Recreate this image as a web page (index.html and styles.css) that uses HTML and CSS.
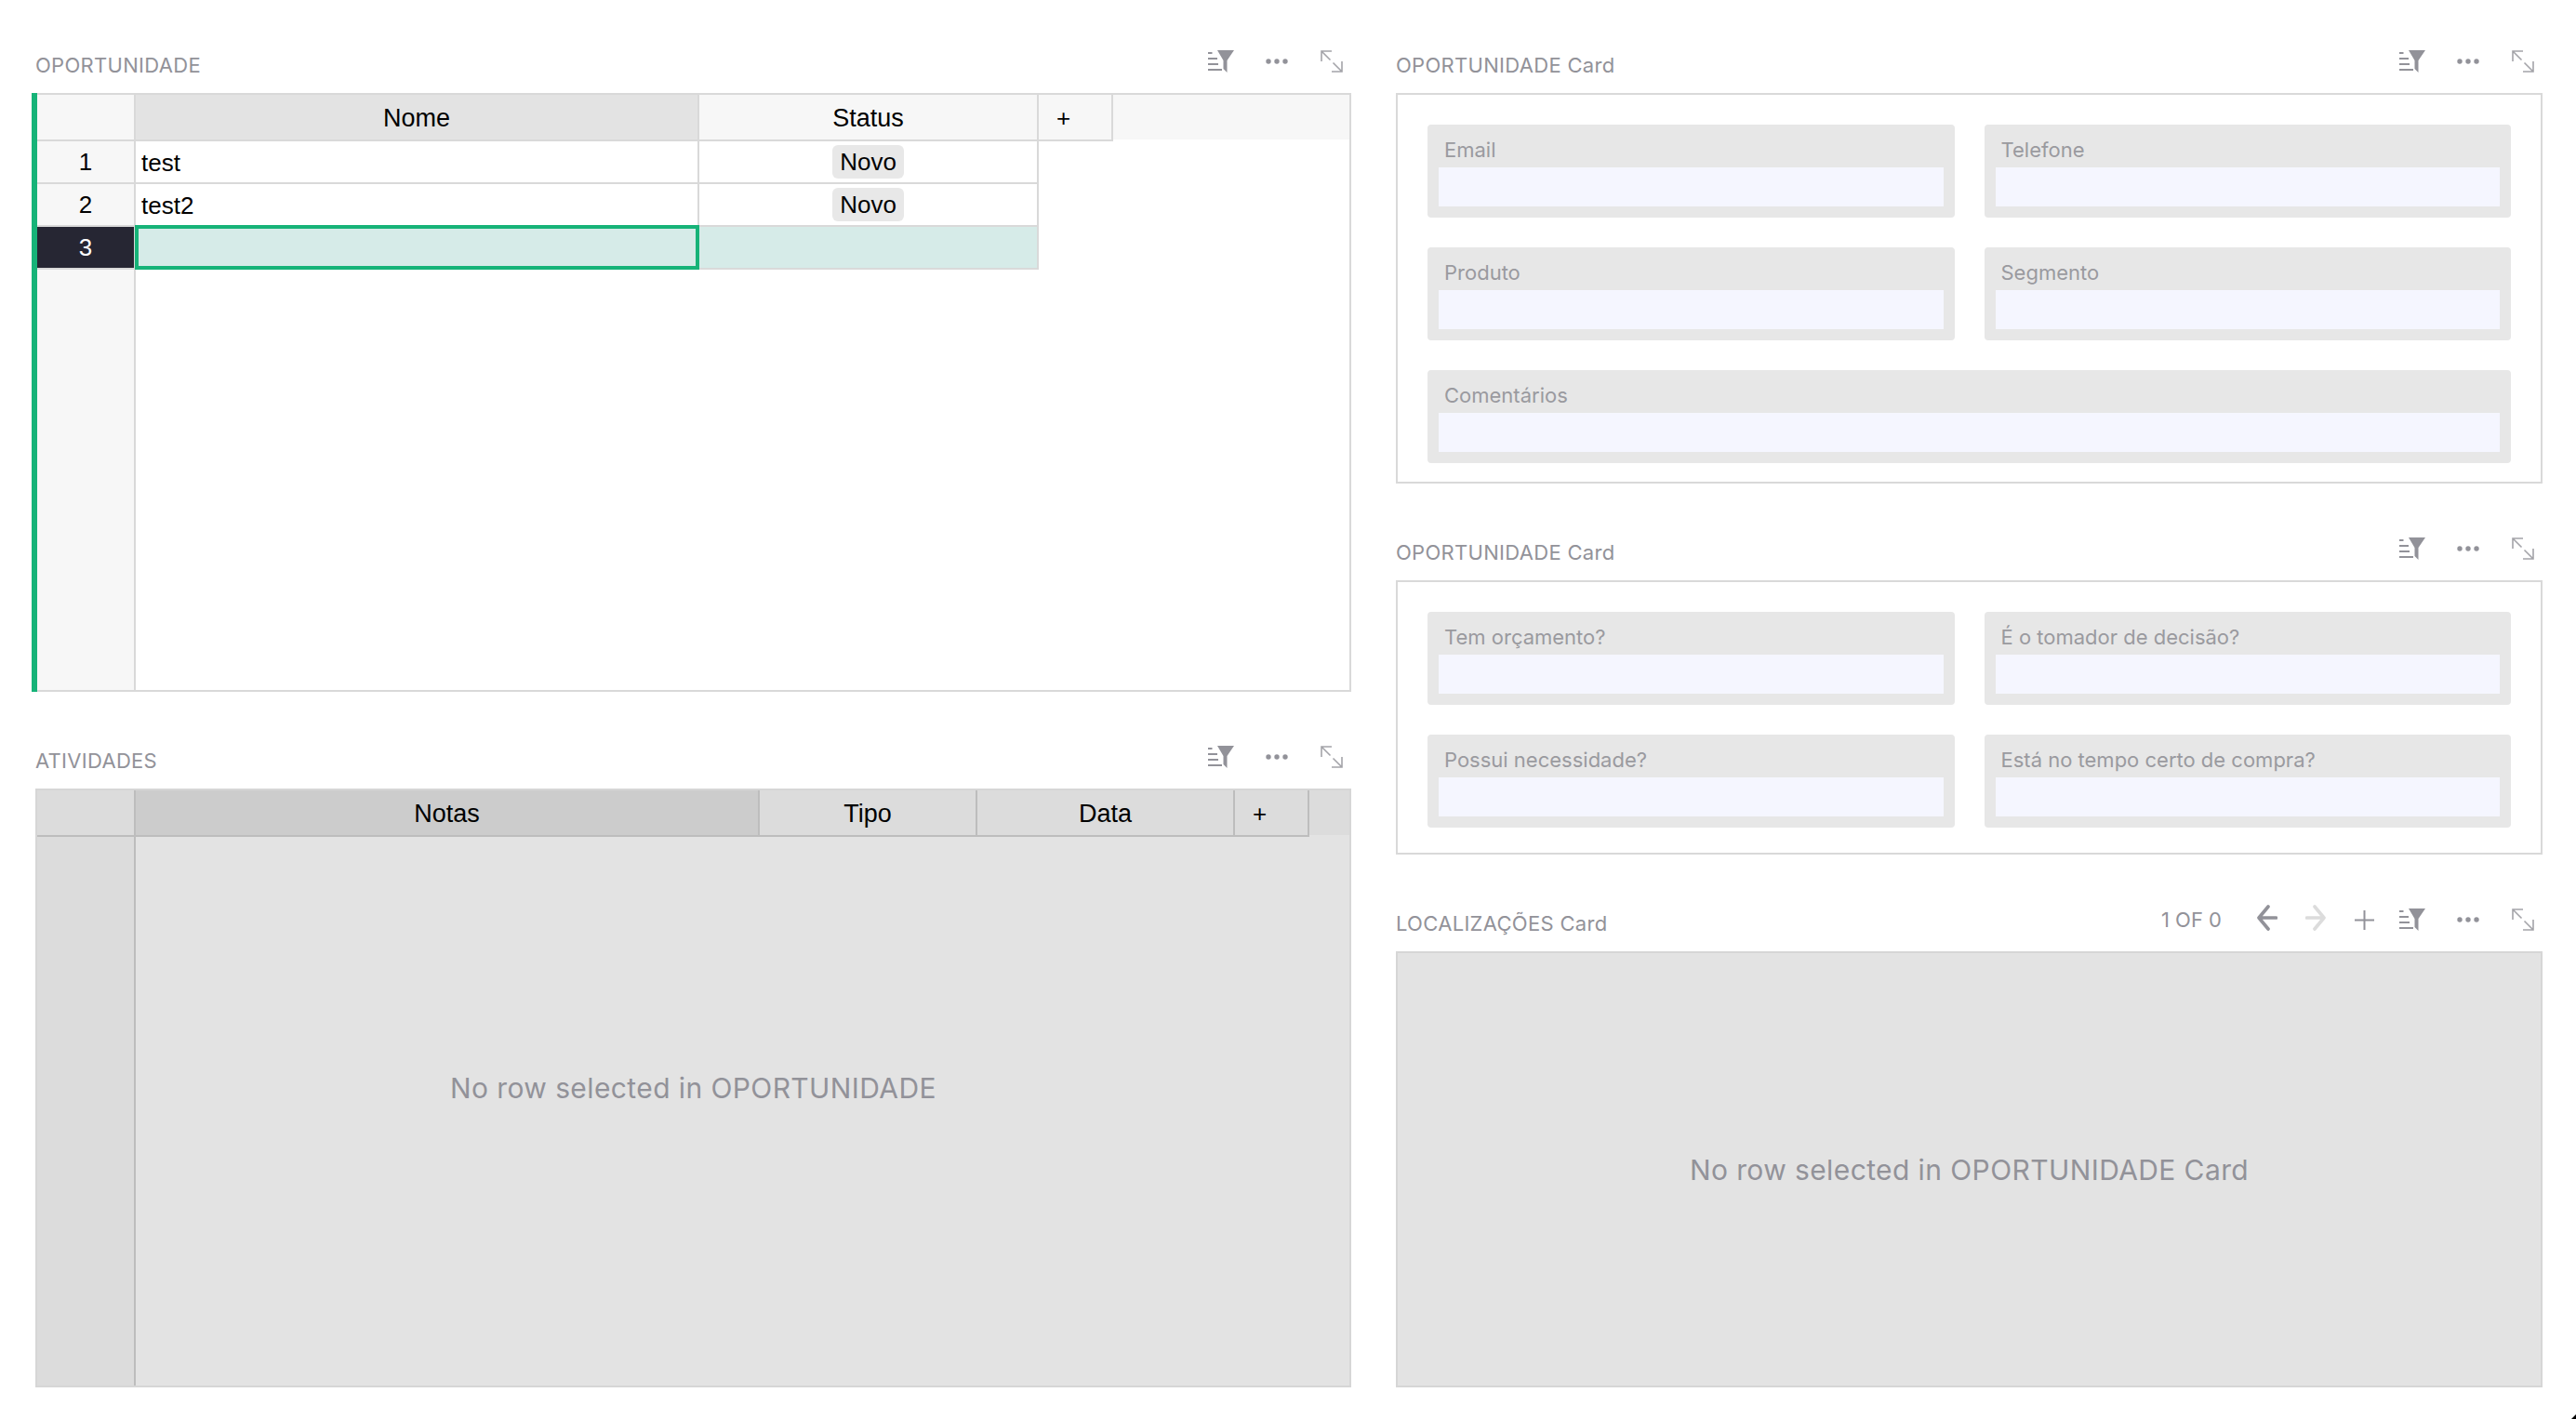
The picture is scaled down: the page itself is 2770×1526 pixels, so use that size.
FILE: index.html
```html
<!DOCTYPE html>
<html lang="en">

<head>
    <title>OPORTUNIDADE</title>
    <link rel="stylesheet" href="styles.css">
</head>

<body>
    <svg width="0" height="0" class="icon-defs">
        <symbol id="icon-filter" viewBox="0 0 28 24">
            <path d="M10 0H28L20.5 11V24L16.5 20V11Z" fill="#929299"/>
            <path d="M0 3H4.5M0 9H10M0 15H11M0 21H15" stroke="#929299" stroke-width="2" fill="none"/>
        </symbol>
        <symbol id="icon-dots" viewBox="0 0 24 24">
            <circle cx="3" cy="12" r="2.7" fill="#929299"/>
            <circle cx="12" cy="12" r="2.7" fill="#929299"/>
            <circle cx="21" cy="12" r="2.7" fill="#929299"/>
        </symbol>
        <symbol id="icon-expand" viewBox="0 0 24 24">
            <path d="M1 12V1H12M1 1L10.500 10.500M23 12V23H12M23 23L13.500 13.500" stroke="#a4a4a9" stroke-width="1.600" fill="none"/>
        </symbol>
    </svg>

    <div class="layout">
        <div class="column">
            <section class="panel">
                <div class="panel-header">
                    <span class="panel-title">OPORTUNIDADE</span>
                    <div class="toolbar">
                        <svg class="icon-filter"><use href="#icon-filter"/></svg>
                        <svg class="icon-square"><use href="#icon-dots"/></svg>
                        <svg class="icon-square"><use href="#icon-expand"/></svg>
                    </div>
                </div>
                <div class="grid-box active-grid grid-main">
                    <div class="active-bar"></div>
                    <div class="row header-row">
                        <div class="cell gutter"></div>
                        <div class="cell head col-nome selected-head">Nome</div>
                        <div class="cell head col-status">Status</div>
                        <div class="cell head col-add">+</div>
                        <div class="head-rest"></div>
                    </div>
                    <div class="row">
                        <div class="cell gutter">1</div>
                        <div class="cell text col-nome">test</div>
                        <div class="cell pill-cell col-status"><span class="pill">Novo</span></div>
                    </div>
                    <div class="row">
                        <div class="cell gutter">2</div>
                        <div class="cell text col-nome">test2</div>
                        <div class="cell pill-cell col-status"><span class="pill">Novo</span></div>
                    </div>
                    <div class="row">
                        <div class="cell gutter gutter-current">3</div>
                        <div class="cell col-nome row-current cursor-cell"></div>
                        <div class="cell col-status row-current"></div>
                    </div>
                    <div class="row filler">
                        <div class="gutter-fill"></div>
                    </div>
                </div>
            </section>

            <section class="panel">
                <div class="panel-header">
                    <span class="panel-title">ATIVIDADES</span>
                    <div class="toolbar">
                        <svg class="icon-filter"><use href="#icon-filter"/></svg>
                        <svg class="icon-square"><use href="#icon-dots"/></svg>
                        <svg class="icon-square"><use href="#icon-expand"/></svg>
                    </div>
                </div>
                <div class="grid-box disabled-grid grid-main">
                    <div class="row header-row">
                        <div class="cell gutter"></div>
                        <div class="cell head col-notas selected-head">Notas</div>
                        <div class="cell head col-tipo">Tipo</div>
                        <div class="cell head col-data">Data</div>
                        <div class="cell head col-add">+</div>
                        <div class="head-rest"></div>
                    </div>
                    <div class="row filler">
                        <div class="gutter-fill"></div>
                    </div>
                    <div class="no-row">No row selected in OPORTUNIDADE</div>
                </div>
            </section>
        </div>

        <div class="column">
            <section class="panel">
                <div class="panel-header">
                    <span class="panel-title">OPORTUNIDADE Card</span>
                    <div class="toolbar">
                        <svg class="icon-filter"><use href="#icon-filter"/></svg>
                        <svg class="icon-square"><use href="#icon-dots"/></svg>
                        <svg class="icon-square"><use href="#icon-expand"/></svg>
                    </div>
                </div>
                <div class="card-box card-contact">
                    <div class="field"><div class="field-label">Email</div><div class="field-input"></div></div>
                    <div class="field"><div class="field-label">Telefone</div><div class="field-input"></div></div>
                    <div class="field"><div class="field-label">Produto</div><div class="field-input"></div></div>
                    <div class="field"><div class="field-label">Segmento</div><div class="field-input"></div></div>
                    <div class="field field-wide"><div class="field-label">Comentários</div><div class="field-input"></div></div>
                </div>
            </section>

            <section class="panel">
                <div class="panel-header">
                    <span class="panel-title">OPORTUNIDADE Card</span>
                    <div class="toolbar">
                        <svg class="icon-filter"><use href="#icon-filter"/></svg>
                        <svg class="icon-square"><use href="#icon-dots"/></svg>
                        <svg class="icon-square"><use href="#icon-expand"/></svg>
                    </div>
                </div>
                <div class="card-box card-qualify">
                    <div class="field"><div class="field-label">Tem orçamento?</div><div class="field-input"></div></div>
                    <div class="field"><div class="field-label">É o tomador de decisão?</div><div class="field-input"></div></div>
                    <div class="field"><div class="field-label">Possui necessidade?</div><div class="field-input"></div></div>
                    <div class="field"><div class="field-label">Está no tempo certo de compra?</div><div class="field-input"></div></div>
                </div>
            </section>

            <section class="panel">
                <div class="panel-header">
                    <span class="panel-title">LOCALIZAÇÕES Card</span>
                    <div class="toolbar">
                        <span class="pager">1 OF 0</span>
                        <svg class="icon-arrow arrow-back" viewBox="0 0 22 28"><path d="M20.500 14H3M12 2L2 14L12 26" stroke="#929299" stroke-width="3.600" stroke-linecap="round" stroke-linejoin="round" fill="none"/></svg>
                        <svg class="icon-arrow arrow-next" viewBox="0 0 22 28"><path d="M1.500 14H19M10 2L20 14L10 26" stroke="#dcdcdc" stroke-width="3.600" stroke-linecap="round" stroke-linejoin="round" fill="none"/></svg>
                        <svg class="icon-plus" viewBox="0 0 21 21"><path d="M10.500 0V21M0 10.500H21" stroke="#929299" stroke-width="2" fill="none"/></svg>
                        <svg class="icon-filter"><use href="#icon-filter"/></svg>
                        <svg class="icon-square"><use href="#icon-dots"/></svg>
                        <svg class="icon-square"><use href="#icon-expand"/></svg>
                    </div>
                </div>
                <div class="card-box card-empty">
                    <div class="no-row">No row selected in OPORTUNIDADE Card</div>
                </div>
            </section>
        </div>
    </div>

    <svg class="corner-mark" viewBox="0 0 5 5"><path d="M5 0V5H0Z" fill="#000"/></svg>
</body>

</html>
```

FILE: styles.css
```css
* {
    box-sizing: border-box;
}

html,
body {
    margin: 0;
    height: 1526px;
    overflow: hidden;
    background-color: #fff;
}

body {
    padding: 40px 36px 0 38px;
    position: relative;
    font-family: "Inter", "Noto Sans", sans-serif;
    color: #929299;
}

.icon-defs {
    display: none;
}

.layout {
    display: grid;
    grid-template-columns: 1415px 1233px;
    column-gap: 48px;
}

.column {
    display: flex;
    flex-direction: column;
    gap: 44px;
}

/* section header */
.panel-header {
    height: 60px;
    display: flex;
    justify-content: space-between;
    align-items: flex-start;
}

.panel-title {
    margin-top: 19px;
    font-size: 22px;
    line-height: 22px;
    letter-spacing: 0.3px;
    white-space: nowrap;
}

.toolbar {
    margin-top: 14px;
    margin-right: 9px;
    height: 24px;
    display: flex;
    align-items: center;
}

.toolbar svg {
    flex: none;
    display: block;
}

.icon-filter {
    width: 28px;
    height: 24px;
}

.icon-square {
    width: 24px;
    height: 24px;
    margin-left: 35px;
}

.icon-filter + .icon-square {
    margin-left: 34px;
}

.pager {
    font-size: 22px;
    line-height: 24px;
    margin-right: 38px;
}

.icon-arrow {
    width: 22px;
    height: 28px;
    margin-top: -4px;
}

.arrow-next {
    margin-left: 30px;
}

.icon-plus {
    width: 21px;
    height: 21px;
    margin: 0 27px 0 31px;
}

/* grids */
.grid-box {
    position: relative;
    display: flex;
    flex-direction: column;
    border: 2px solid #d9d9d9;
    font-family: "Liberation Sans", Arial, sans-serif;
    font-size: 26px;
    color: #000;
}

.grid-main {
    height: 644px;
}

.active-bar {
    position: absolute;
    left: -6px;
    top: -2px;
    bottom: -2px;
    width: 6px;
    background-color: #16b378;
}

.row {
    height: 46px;
    display: flex;
    flex: none;
}

.header-row {
    height: 50px;
}

.filler {
    flex: 1;
}

.cell {
    flex: none;
    height: 100%;
    display: flex;
    align-items: center;
    justify-content: center;
    border-right: 2px solid #d9d9d9;
    border-bottom: 2px solid #d9d9d9;
}

.gutter {
    width: 106px;
    background-color: #f7f7f7;
}

.gutter-fill {
    width: 106px;
    background-color: #f7f7f7;
    border-right: 2px solid #d9d9d9;
}

.gutter-current {
    background-color: #262633;
    color: #fff;
}

.head {
    padding-top: 2px;
    font-size: 27px;
    background-color: #f7f7f7;
}

.selected-head {
    background-color: #e3e3e3;
}

.head-rest {
    flex: 1;
    height: 48px;
    background-color: #f7f7f7;
}

.col-nome {
    width: 606px;
}

.col-status {
    width: 365px;
}

.col-add {
    width: 80px;
    justify-content: flex-start;
    padding-left: 19px;
    font-size: 26px;
}

.col-notas {
    width: 671px;
}

.col-tipo {
    width: 234px;
}

.col-data {
    width: 277px;
}

.text {
    justify-content: flex-start;
    padding: 3px 0 0 6px;
}

.pill {
    height: 36px;
    padding: 0 8px;
    display: flex;
    align-items: center;
    border-radius: 6px;
    background-color: #e8e8e8;
}

.row-current {
    background-color: #d6ebe8;
}

.cursor-cell {
    position: relative;
}

.cursor-cell::after {
    content: "";
    position: absolute;
    left: -1px;
    right: -2px;
    top: -2px;
    bottom: -2px;
    border: 4px solid #16b378;
}

/* disabled grid, no row picked in the linked section */
.disabled-grid {
    background-color: #e3e3e3;
    border-color: #d6d6d6;
}

.disabled-grid .cell {
    border-color: #bdbdbd;
}

.disabled-grid .gutter,
.disabled-grid .head,
.disabled-grid .head-rest,
.disabled-grid .gutter-fill {
    background-color: #dcdcdc;
}

.disabled-grid .gutter-fill {
    border-color: #bdbdbd;
}

.disabled-grid .selected-head {
    background-color: #ccc;
}

.no-row {
    position: absolute;
    top: 0;
    left: 0;
    right: 0;
    bottom: 0;
    display: flex;
    align-items: center;
    justify-content: center;
    font-family: "Inter", "Noto Sans", sans-serif;
    font-size: 30px;
    letter-spacing: 0.4px;
    color: #929299;
}

/* cards */
.card-box {
    position: relative;
    border: 2px solid #d9d9d9;
}

.card-contact,
.card-qualify {
    display: grid;
    grid-template-columns: 1fr 1fr;
    grid-auto-rows: 100px;
    gap: 32px;
    padding: 32px 32px 0;
}

.card-contact {
    height: 420px;
}

.card-qualify {
    height: 295px;
}

.card-empty {
    height: 469px;
    background-color: #e3e3e3;
    border-color: #d6d6d6;
}

.field {
    padding: 0 12px 12px;
    background-color: #e7e7e7;
    border-radius: 4px;
}

.field-wide {
    grid-column: span 2;
}

.field-label {
    height: 46px;
    padding: 15px 0 0 6px;
    font-size: 22px;
    line-height: 24px;
    color: #9a9a9f;
    white-space: nowrap;
}

.field-input {
    height: 42px;
    background-color: #f5f6ff;
}

.corner-mark {
    position: absolute;
    right: 0;
    bottom: 0;
    width: 5px;
    height: 5px;
}
```
